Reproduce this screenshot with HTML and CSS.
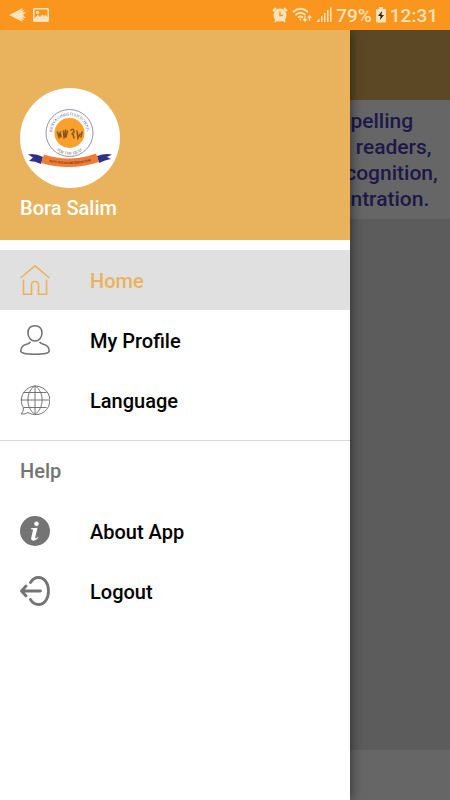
FILE: index.html
```
<!DOCTYPE html>
<html lang="en">
<head>
    <meta charset="UTF-8">
    <meta name="viewport" content="width=device-width, initial-scale=1.0">
    <title>Home</title>
    <link rel="stylesheet" href="styles.css">
</head>
<body>
    <!-- Status bar -->
    <div class="status-bar">
        <div class="status-left">
            <svg width="18" height="16" viewBox="0 0 18 16"><path d="M0 8L14 1L12 4L16 2.500L13 5.500L17 5L14 8L17 11L13 10.500L16 13.500L12 12L14 15Z" fill="#fee3bb"/></svg>
            <svg width="16" height="14" viewBox="0 0 16 14"><path fill="#fee3bb" fill-rule="evenodd" d="M1.500 0H14.500Q16 0 16 1.500V12.500Q16 14 14.500 14H1.500Q0 14 0 12.500V1.500Q0 0 1.500 0ZM1.500 1.500V10L5 7L7 9L9.500 6.500L11 8L12.500 7L14.500 9V1.500Z"/><circle cx="4.500" cy="4.500" r="1.700" fill="#fee3bb"/></svg>
        </div>
        <div class="status-right">
            <svg width="16" height="16" viewBox="0 0 16 16"><circle cx="8" cy="8" r="6.600" fill="#fee3bb"/><path d="M1 4L4 1M15 4L12 1M3 15L5 12M13 15L11 12" stroke="#fee3bb" stroke-width="2"/><path d="M8 4.500V8.500H11" fill="none" stroke="#fa961e" stroke-width="1.400"/></svg>
            <svg width="20" height="16" viewBox="0 0 20 16" fill="none" stroke="#fee3bb" stroke-width="1.700"><path d="M1 5Q8.500 -1.500 16 5M3.500 8Q8.500 3.500 13.500 8M6 10.500Q8.500 8.500 11 10.500"/><circle cx="8.500" cy="12.500" r="1" fill="#fee3bb" stroke="none"/><path stroke-width="1.300" d="M13 9V14M11.300 12.300L13 14L14.700 12.300M17.500 14V9M15.800 10.700L17.500 9L19.200 10.700"/></svg>
            <svg width="16" height="16" viewBox="0 0 16 16" fill="#fee3bb"><path d="M0 15L3.500 11.500V15ZM5 9H6.500V15H5ZM8 6H9.500V15H8ZM11 3H12.500V15H11ZM14 0.500H15.500V15H14Z"/></svg>
            <span class="battery-level">79%</span>
            <svg width="10" height="16" viewBox="0 0 10 16"><path fill="#fee3bb" d="M3 0H7V2H9Q10 2 10 3V14.500Q10 15.500 9 15.500H1Q0 15.500 0 14.500V3Q0 2 1 2H3Z"/><path fill="#3a2410" d="M6 4L2 9H4.500L4 13L8 8H5.500Z"/></svg>
            <span class="clock">12:31</span>
        </div>
    </div>

    <div class="screen">
        <!-- Page behind the drawer -->
        <main class="page">
            <div class="toolbar"></div>
            <p class="intro">  pelling
   readers,
 cognition,
  ntration.</p>
            <div class="content"></div>
            <div class="footer"></div>
        </main>

        <!-- Navigation drawer -->
        <nav class="drawer">
            <header class="drawer-header">
                <svg class="avatar" viewBox="0 0 100 100" role="img" aria-label="School logo">
                    <defs>
                        <path id="topArc" d="M32.500 49A17.500 17.500 0 1 1 66.500 49"/>
                        <path id="bottomArc" d="M29.500 53A21.500 21.500 0 0 0 69.500 53"/>
                        <path id="ribbonLine" d="M24 72.500Q50 80 76 71.500"/>
                    </defs>
                    <circle cx="50" cy="50" r="50" fill="#fff"/>
                    <circle cx="49.500" cy="45" r="23.500" fill="#fff" stroke="#777790" stroke-width=".8"/>
                    <circle cx="49.500" cy="45" r="15" fill="#f9a12c"/>
                    <path fill="none" stroke="#8a5420" stroke-width="1.500" stroke-linecap="round" d="M37.500 44L39 49L40.500 44M40.500 46L41 49M43.500 43L44 50M45.500 42L45 49M47.500 43L46 49M51 42Q54 40 54 44L52 46M53 46L54 50M57 43L58 50L60 46M62 44L61 49"/>
                    <text class="seal-text"><textPath href="#topArc" startOffset="50%" text-anchor="middle">KENYA CHRISTIAN SCHOOL</textPath></text>
                    <text class="seal-text"><textPath href="#bottomArc" startOffset="50%" text-anchor="middle">FOR THE DEAF</textPath></text>
                    <path fill="#30308c" d="M8 66.500Q15 65 23 69L21 76Q15 73 9 73L13 69.500ZM92 66.500Q85 65 77 68L79 75Q85 72 91 71L87 69Z"/>
                    <path fill="#ef7d35" d="M24 66.500Q50 75 76 65.500L79 74Q50 83.500 21 75Z"/>
                    <text class="ribbon-text"><textPath href="#ribbonLine" startOffset="50%" text-anchor="middle">DUTY DISCIPLINE DEDICATION</textPath></text>
                </svg>
                <div class="user-name">Bora Salim</div>
            </header>

            <ul class="menu">
                <li>
                    <a class="menu-item active" href="#home">
                        <svg class="icon" viewBox="0 0 30 30"><path stroke-width="1.600" d="M.5 13L15 .8L29.500 13M3.500 14.500V29.200H11.500V19.500Q11.500 16.500 15 16.500Q18.500 16.500 18.500 19.500V29.200H26.500V14.500"/></svg>
                        <span>Home</span>
                    </a>
                </li>
                <li>
                    <a class="menu-item" href="#profile">
                        <svg class="icon" viewBox="0 0 30 30"><path stroke-width="1.600" d="M15 .8C10.500 .8 8 3.500 8 8C8 12.500 11 16 15 16C19 16 22 12.500 22 8C22 3.500 19.500 .8 15 .8ZM10.500 17Q9.500 18.500 6 19.500C2.500 20.500 .8 22.500 .8 26C.8 28 6 29.200 15 29.200C24 29.200 29.200 28 29.200 26C29.200 22.500 27.500 20.500 24 19.500Q20.500 18.500 19.500 17"/></svg>
                        <span>My Profile</span>
                    </a>
                </li>
                <li>
                    <a class="menu-item" href="#language">
                        <svg class="icon" viewBox="0 0 30 30"><path stroke-width="1" d="M3.500 23A14.300 14.300 0 1 1 8 27.500Q5 29.500 1 29Q3.500 27 3.500 23ZM15 .7V29.300M15 .7C5.500 7 5.500 23 15 29.300M15 .7C24.500 7 24.500 23 15 29.300M.7 15H29.300M3.500 7.500H26.500M4 22.500H26.500"/></svg>
                        <span>Language</span>
                    </a>
                </li>
            </ul>

            <section class="help">
                <h2>Help</h2>
                <ul class="menu">
                    <li>
                        <a class="menu-item" href="#about">
                            <svg class="icon" viewBox="0 0 30 30"><circle cx="15" cy="15" r="15" fill="#747474" stroke="none"/><circle cx="16.500" cy="7.800" r="2.300" fill="#fff" stroke="none"/><path fill="#fff" stroke="none" d="M11 12.200L17.500 11.700L15.200 21.500Q15 22.700 16 22.300L18 21L18.500 21.800Q15.500 25 12.800 24.600Q10.700 24.200 11.300 21.500L13 14Q13 13.200 11 13.300Z"/></svg>
                            <span>About App</span>
                        </a>
                    </li>
                    <li>
                        <a class="menu-item" href="#logout">
                            <svg class="icon" viewBox="0 0 30 30"><path stroke-width="2.800" stroke-linecap="round" stroke-linejoin="round" d="M10.500 6.500C12.500 3 15 1.500 18.500 1.500C24.500 1.500 28.500 7.500 28.500 15C28.500 22.500 24.500 28.500 18.500 28.500C15 28.500 12.500 27 10.500 23.500M20.500 15H2M6 10L1.500 15L6 20"/></svg>
                            <span>Logout</span>
                        </a>
                    </li>
                </ul>
            </section>
        </nav>
    </div>
</body>
</html>
```
FILE: styles.css
```
* {
    box-sizing: border-box;
}
body {
    font-family: Roboto, Arial, sans-serif;
    font-size: 20px;
    font-weight: 500;
    background-color: #666;
    display: flex;
    flex-direction: column;
    min-height: 100vh;
    margin: 0;
}

/* Status bar */
.status-bar {
    display: flex;
    justify-content: space-between;
    align-items: center;
    height: 30px;
    padding: 0 12px 0 9px;
    background-color: #fa961e;
    color: #fee3bb;
    font-size: 19px;
}
.status-left {
    display: flex;
    align-items: center;
    gap: 6px;
}
.status-right {
    display: flex;
    align-items: center;
    gap: 4px;
}

.screen {
    position: relative;
    display: flex;
    flex: 1;
    overflow: hidden;
}

/* Dimmed page */
.page {
    display: flex;
    flex-direction: column;
    flex: 1;
}
.toolbar {
    height: 70px;
    background-color: #5d4825;
}
.intro {
    margin: 0;
    padding: 8px 0 7px 340px;
    line-height: 26px;
    font-size: 21px;
    color: #1d1848;
    white-space: pre;
}
.content {
    flex: 1;
    background-color: #5c5c5c;
}
.footer {
    height: 50px;
}

/* Drawer */
.drawer {
    position: absolute;
    top: 0;
    bottom: 0;
    left: 0;
    width: 350px;
    max-width: 90%;
    background-color: #fff;
    box-shadow: 0 0 12px rgba(0, 0, 0, 0.6);
}
.drawer-header {
    padding: 58px 20px 20px;
    margin-bottom: 10px;
    background-color: #e8b35c;
}
.avatar {
    display: block;
    width: 100px;
    height: 100px;
}
.seal-text {
    font-family: "Liberation Serif", serif;
    font-size: 4px;
    fill: #55556e;
}
.ribbon-text {
    font-family: Roboto, sans-serif;
    font-size: 3px;
    font-weight: 700;
    fill: #70351c;
}
.user-name {
    margin-top: 8px;
    line-height: 24px;
    color: #fff;
}
.menu {
    list-style: none;
    margin: 0;
    padding: 0;
}
.menu-item {
    display: flex;
    align-items: center;
    gap: 40px;
    height: 60px;
    padding: 0 20px;
    color: #000;
    text-decoration: none;
}
.menu-item span {
    padding-top: 2px;
}
.menu-item.active {
    background-color: #e0e0e0;
    color: #e8b35c;
}
.icon {
    width: 30px;
    height: 30px;
    fill: none;
    stroke: #747474;
}
.active .icon {
    stroke: #e8b35c;
}
.help {
    margin-top: 10px;
    border-top: 1px solid #d8d8d8;
}
.help h2 {
    margin: 0;
    padding: 0 20px;
    line-height: 60px;
    font-size: 20px;
    font-weight: 500;
    color: #747474;
}
```
